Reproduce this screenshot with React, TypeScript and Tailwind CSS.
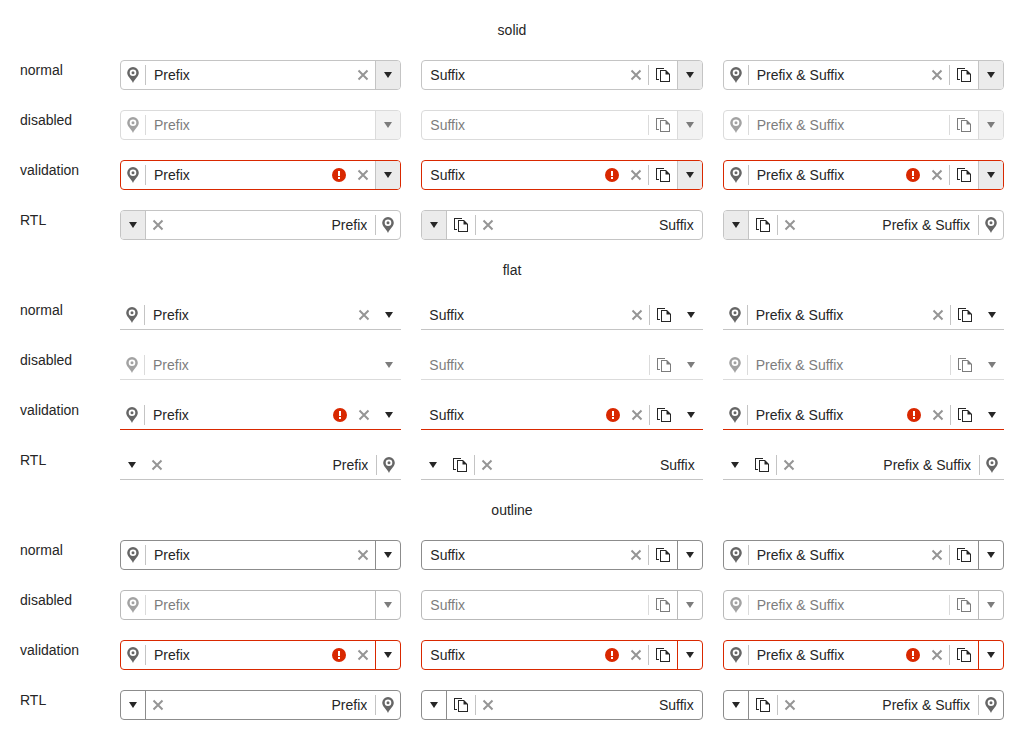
import { useId } from "react";

type Look = "solid" | "flat" | "outline";
type State = "normal" | "disabled" | "validation" | "RTL";
type Content = { text: string; prefix: boolean; suffix: boolean };

const looks: Look[] = ["solid", "flat", "outline"];
const states: State[] = ["normal", "disabled", "validation", "RTL"];
const contents: Content[] = [
  { text: "Prefix", prefix: true, suffix: false },
  { text: "Suffix", prefix: false, suffix: true },
  { text: "Prefix & Suffix", prefix: true, suffix: true },
];

function PinIcon() {
  return (
    <svg width="16" height="16" viewBox="0 0 16 16" className="text-[#666666]" aria-hidden="true">
      <path
        fill="currentColor"
        fillRule="evenodd"
        d="M8 0a5.800 5.800 0 0 0-5.800 5.800C2.200 9.500 6 11.500 8 16c2-4.500 5.800-6.500 5.800-10.200A5.800 5.800 0 0 0 8 0Zm0 2.400a3.300 3.300 0 1 1 0 6.600 3.300 3.300 0 0 1 0-6.600Zm0 1.800a1.500 1.500 0 1 0 0 3 1.500 1.500 0 0 0 0-3Z"
      />
    </svg>
  );
}

function CopyIcon() {
  return (
    <svg width="16" height="16" viewBox="0 0 16 16" aria-hidden="true">
      <path
        fill="currentColor"
        fillRule="evenodd"
        d="M1 1h8v1H2v10h2v1H1V1ZM5 3h6l4 4v8H5V3Zm1 1v10h8V7.500h-3.500V4H6Z"
      />
    </svg>
  );
}

function ClearIcon() {
  return (
    <svg width="16" height="16" viewBox="0 0 16 16" aria-hidden="true">
      <path d="M3.500 3.500l9 9M12.500 3.500l-9 9" stroke="#959595" strokeWidth="2" fill="none" />
    </svg>
  );
}

function ErrorIcon() {
  return (
    <svg width="16" height="16" viewBox="0 0 16 16" role="img" aria-label="Invalid">
      <circle cx="8" cy="8" r="7" fill="#d92800" />
      <path d="M7 4h2v5H7zM7 10h2v2H7z" fill="#fff" />
    </svg>
  );
}

function CaretIcon() {
  return (
    <svg width="16" height="16" viewBox="0 0 16 16" aria-hidden="true">
      <path d="M4 5h8l-4 6z" fill="currentColor" />
    </svg>
  );
}

function Separator() {
  return <span className="h-5 w-px shrink-0 bg-[#c4c4c4]" />;
}

function ComboBox({
  look,
  state,
  content,
  labelId,
}: {
  look: Look;
  state: State;
  content: Content;
  labelId: string;
}) {
  const disabled = state === "disabled";
  const invalid = state === "validation";
  const frames: Record<Look, string> = {
    solid: "rounded border",
    flat: "border-y border-t-transparent",
    outline: "rounded border",
  };
  const edge = invalid
    ? "border-[#d92800]"
    : look === "outline"
      ? "border-[#8c8c8c]"
      : "border-[#c4c4c4]";
  const buttonLook =
    look === "solid"
      ? "border-[#c4c4c4] bg-[#ebebeb]"
      : look === "flat"
        ? "border-transparent"
        : invalid
          ? "border-[#d92800]"
          : "border-[#8c8c8c]";

  return (
    <div
      dir={state === "RTL" ? "rtl" : "ltr"}
      className={`flex h-[30px] min-w-0 items-center overflow-hidden ${edge} ${frames[look]} ${disabled ? "opacity-60" : ""}`}
    >
      {content.prefix && (
        <>
          <span className="flex w-6 shrink-0 justify-center">
            <PinIcon />
          </span>
          <Separator />
        </>
      )}
      <input
        type="text"
        role="combobox"
        aria-expanded="false"
        aria-labelledby={labelId}
        aria-invalid={invalid}
        disabled={disabled}
        defaultValue={content.text}
        className="h-5 min-w-0 flex-1 bg-transparent px-2 text-sm outline-none"
      />
      {invalid && (
        <span className="flex w-6 shrink-0 justify-center">
          <ErrorIcon />
        </span>
      )}
      {!disabled && (
        <button type="button" aria-label="Clear" className="flex w-6 shrink-0 justify-center">
          <ClearIcon />
        </button>
      )}
      {content.suffix && (
        <>
          <Separator />
          <span className="flex w-7 shrink-0 justify-center">
            <CopyIcon />
          </span>
        </>
      )}
      <button
        type="button"
        aria-label="Open list"
        disabled={disabled}
        className={`flex w-[25px] shrink-0 items-center justify-center self-stretch border-s ${buttonLook}`}
      >
        <CaretIcon />
      </button>
    </div>
  );
}

function Row({ look, state }: { look: Look; state: State }) {
  const id = useId();
  return (
    <div className="grid grid-cols-[80px_repeat(3,minmax(0,1fr))] gap-5">
      <span id={id}>{state}</span>
      {contents.map((content) => (
        <ComboBox key={content.text} look={look} state={state} content={content} labelId={id} />
      ))}
    </div>
  );
}

export default function App() {
  return (
    <main className="flex flex-col gap-5 bg-white p-5 font-['Liberation_Sans',Arial,sans-serif] text-sm text-[#262626]">
      {looks.map((look) => (
        <section key={look} className="flex flex-col gap-5">
          <h2 className="text-center">{look}</h2>
          {states.map((state) => (
            <Row key={state} look={look} state={state} />
          ))}
        </section>
      ))}
    </main>
  );
}
